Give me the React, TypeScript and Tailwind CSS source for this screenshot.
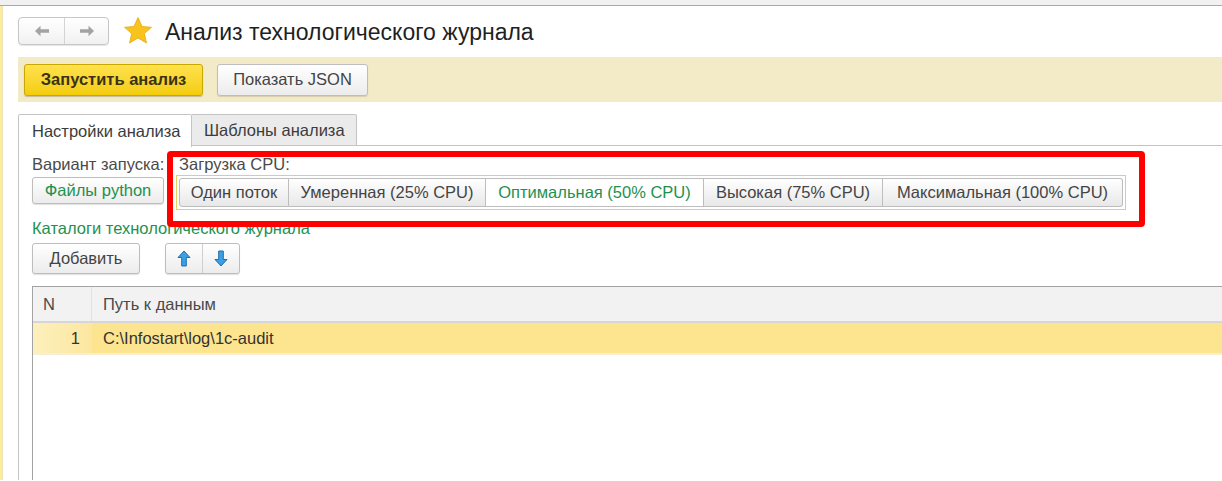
const FONT = "font-['Liberation_Sans','Arial',sans-serif]";

function Star() {
  return (
    <svg width="30" height="30" viewBox="0 0 30 30">
      <polygon
        points="15,1.5 19,10.5 28.5,11.3 21.3,17.6 23.5,27 15,22 6.5,27 8.7,17.6 1.5,11.3 11,10.5"
        fill="#f8c31c"
        stroke="#e3a90b"
        strokeWidth="0.8"
        strokeLinejoin="round"
      />
    </svg>
  );
}

function NavArrow({ dir }: { dir: 'left' | 'right' }) {
  return (
    <svg width="16" height="12" viewBox="0 0 16 12" className={dir === 'right' ? 'rotate-180' : ''}>
      <path d="M1 6 L6.5 0.8 L6.5 4.3 L15 4.3 L15 7.7 L6.5 7.7 L6.5 11.2 Z" fill="#a3a3a3" />
    </svg>
  );
}

function BlueArrow({ dir }: { dir: 'up' | 'down' }) {
  return (
    <svg width="14" height="17" viewBox="0 0 14 17" className={dir === 'down' ? 'rotate-180' : ''}>
      <path
        d="M7 1 L13 7.5 L9.3 7.5 L9.3 16 L4.7 16 L4.7 7.5 L1 7.5 Z"
        fill="#3d9fe0"
        stroke="#1f6fb3"
        strokeWidth="1"
        strokeLinejoin="round"
      />
    </svg>
  );
}

const cpuModes = [
  { label: 'Один поток', w: 'w-[110px]' },
  { label: 'Умеренная (25% CPU)', w: 'w-[197px]' },
  { label: 'Оптимальная (50% CPU)', w: 'w-[218px]', active: true },
  { label: 'Высокая (75% CPU)', w: 'w-[179px]' },
  { label: 'Максимальная (100% CPU)', w: 'w-[240px]' },
];

const btn =
  'border border-[#bdbdbd] rounded-[3px] bg-gradient-to-b from-white to-[#ececec] shadow-[0_1px_1px_rgba(0,0,0,0.12)] flex items-center justify-center';

export default function App() {
  return (
    <div className={`relative w-[1222px] h-[481px] overflow-hidden bg-white ${FONT}`}>
      <div className="h-[6px] bg-[#f1f1f1] border-b border-[#a9a9a9]" />
      <div className="flex h-[474px]">
        <div className="w-[3px] bg-[#fcec9e] border-r border-[#ece2b4]" />
        <div className="flex-1 pl-[15px] flex flex-col">
          {/* header */}
          <div className="flex items-center h-[28px] mt-[11px]">
            <div className="flex h-[28px] w-[91px] border border-[#c6c6c6] rounded-[4px] bg-gradient-to-b from-white to-[#f1f1f1] shadow-[0_1px_1px_rgba(0,0,0,0.1)]">
              <div className="w-[46px] flex items-center justify-center border-r border-[#d4d4d4]">
                <NavArrow dir="left" />
              </div>
              <div className="flex-1 flex items-center justify-center">
                <NavArrow dir="right" />
              </div>
            </div>
            <div className="ml-[14px]">
              <Star />
            </div>
            <div className="ml-[12px] mt-[3px] text-[23px] text-[#1f1f1f] leading-none">
              Анализ технологического журнала
            </div>
          </div>

          {/* command bar */}
          <div className="mt-[12px] h-[45px] bg-[#f3ebc7] flex items-center pl-[6px] gap-[14px]">
            <div className="w-[179px] h-[32px] border border-[#c9a800] rounded-[3px] bg-gradient-to-b from-[#ffe14a] to-[#f4cd05] shadow-[0_1px_1px_rgba(0,0,0,0.2)] flex items-center justify-center text-[16.5px] font-bold text-[#3a3316]">
              Запустить анализ
            </div>
            <div className={`${btn} w-[151px] h-[32px] text-[16.5px] text-[#444]`}>Показать JSON</div>
          </div>

          {/* tabs */}
          <div className="mt-[12px] flex h-[32px]">
            <div className="w-[174px] h-[33px] border border-b-0 border-[#c4c4c4] bg-white rounded-t-[2px] flex items-center pl-[13px] text-[16.5px] text-[#3c3c3c] z-10">
              Настройки анализа
            </div>
            <div className="w-[165px] border border-l-0 border-[#c4c4c4] bg-[#ebebeb] rounded-tr-[2px] flex items-center pl-[12px] text-[16.5px] text-[#3c3c3c]">
              Шаблоны анализа
            </div>
            <div className="flex-1 border-b border-[#c4c4c4]" />
          </div>

          {/* panel */}
          <div className="flex-1 border-l border-[#c4c4c4] pl-[13px] pt-[8px] flex flex-col">
            <div className="flex">
              <div className="w-[144px] flex flex-col">
                <div className="h-[20px] text-[16.5px] leading-[20px] text-[#4a4a4a] whitespace-nowrap">Вариант запуска:</div>
                <div className={`${btn} mt-[3px] w-[132px] h-[27px] text-[16.5px] text-[#1e9150]`}>Файлы python</div>
              </div>
              <div className="flex flex-col">
                <div className="h-[20px] pl-[3px] text-[16.5px] leading-[20px] text-[#4a4a4a]">Загрузка CPU:</div>
                <div className="mt-[1px] border border-[#e6cf63] p-[2px] flex h-[35px]">
                  {cpuModes.map((m, i) => (
                    <div
                      key={m.label}
                      className={`${m.w} h-[29px] flex items-center justify-center text-[16.5px] border border-[#bdbdbd] ${
                        i > 0 ? 'border-l-0' : 'rounded-l-[3px]'
                      } ${i === cpuModes.length - 1 ? 'rounded-r-[3px]' : ''} ${
                        m.active
                          ? 'bg-white text-[#1e9150]'
                          : 'bg-gradient-to-b from-white to-[#e8e8e8] text-[#444]'
                      }`}
                    >
                      {m.label}
                    </div>
                  ))}
                </div>
              </div>
            </div>

            <div className="mt-[9px] h-[19px] text-[16.5px] leading-[19px] text-[#1e9150]">Каталоги технологического журнала</div>

            <div className="mt-[5px] flex items-center">
              <div className={`${btn} w-[108px] h-[31px] text-[16.5px] text-[#444]`}>Добавить</div>
              <div className="ml-[25px] flex h-[31px] w-[75px] border border-[#bdbdbd] rounded-[3px] bg-gradient-to-b from-white to-[#ececec] shadow-[0_1px_1px_rgba(0,0,0,0.12)]">
                <div className="w-[37px] flex items-center justify-center border-r border-[#cfcfcf]">
                  <BlueArrow dir="up" />
                </div>
                <div className="flex-1 flex items-center justify-center">
                  <BlueArrow dir="down" />
                </div>
              </div>
            </div>

            {/* table */}
            <div className="mt-[12px] flex-1 border-l border-t border-[#a3a3a3] flex flex-col">
              <div className="flex h-[36px] bg-[#f2f2f2] border-b-2 border-[#d6d6d6] text-[16.5px] text-[#4a4a4a]">
                <div className="w-[59px] pl-[10px] flex items-center border-r border-[#e2e2e2]">N</div>
                <div className="flex-1 pl-[11px] flex items-center">Путь к данным</div>
              </div>
              <div className="flex h-[32px] bg-[#fde48e] border-b-2 border-[#f6efd6] text-[16.5px] text-[#333]">
                <div className="w-[59px] pr-[12px] flex items-center justify-end bg-gradient-to-r from-[#fdf0bc] to-[#fce7a0]">1</div>
                <div className="flex-1 pl-[11px] flex items-center">C:\Infostart\log\1c-audit</div>
              </div>
              <div className="flex-1 bg-white" />
            </div>
          </div>
        </div>
      </div>

      {/* annotation frame */}
      <div className="absolute left-[167px] top-[151px] w-[978px] h-[76px] border-[6px] border-[#ff0000] rounded-[4px] pointer-events-none" />
    </div>
  );
}
